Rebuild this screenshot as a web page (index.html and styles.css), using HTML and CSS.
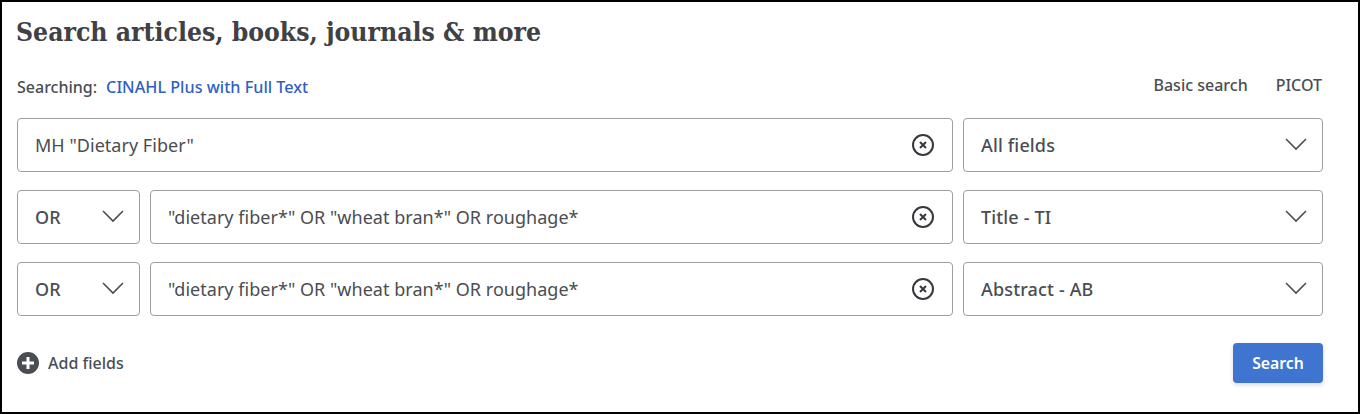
FILE: index.html
```html
<!DOCTYPE html>
<html lang="en">
<head>
    <meta charset="UTF-8">
    <title>Advanced search</title>
    <link rel="stylesheet" href="styles.css">
</head>
<body>
    <div class="panel">
        <h1>Search articles, books, journals &amp; more</h1>
        <div class="meta">
            <div class="searching">
                <span>Searching:</span>
                <a class="db-link" href="#">CINAHL Plus with Full Text</a>
            </div>
            <div class="modes">
                <a href="#">Basic search</a>
                <a href="#">PICOT</a>
            </div>
        </div>
        <div class="rows">
            <div class="row">
                <div class="box query">
                    <span class="query-text">MH "Dietary Fiber"</span>
                    <svg class="clear" viewBox="0 0 24 24"><circle cx="12" cy="12" r="10"/><path d="M9 9l6 6M15 9l-6 6"/></svg>
                </div>
                <div class="box select field">
                    <span>All fields</span>
                    <svg class="chev" viewBox="0 0 24 14"><path d="M2 2l10 10L22 2"/></svg>
                </div>
            </div>
            <div class="row">
                <div class="box select bool">
                    <span>OR</span>
                    <svg class="chev" viewBox="0 0 24 14"><path d="M2 2l10 10L22 2"/></svg>
                </div>
                <div class="box query">
                    <span class="query-text">"dietary fiber*" OR "wheat bran*" OR roughage*</span>
                    <svg class="clear" viewBox="0 0 24 24"><circle cx="12" cy="12" r="10"/><path d="M9 9l6 6M15 9l-6 6"/></svg>
                </div>
                <div class="box select field">
                    <span>Title - TI</span>
                    <svg class="chev" viewBox="0 0 24 14"><path d="M2 2l10 10L22 2"/></svg>
                </div>
            </div>
            <div class="row">
                <div class="box select bool">
                    <span>OR</span>
                    <svg class="chev" viewBox="0 0 24 14"><path d="M2 2l10 10L22 2"/></svg>
                </div>
                <div class="box query">
                    <span class="query-text">"dietary fiber*" OR "wheat bran*" OR roughage*</span>
                    <svg class="clear" viewBox="0 0 24 24"><circle cx="12" cy="12" r="10"/><path d="M9 9l6 6M15 9l-6 6"/></svg>
                </div>
                <div class="box select field">
                    <span>Abstract - AB</span>
                    <svg class="chev" viewBox="0 0 24 14"><path d="M2 2l10 10L22 2"/></svg>
                </div>
            </div>
        </div>
        <div class="actions">
            <a class="add" href="#">
                <svg class="plus" viewBox="0 0 22 22"><circle cx="11" cy="11" r="11"/><path d="M11 5v12M5 11h12"/></svg>
                Add fields
            </a>
            <button type="button" class="search-btn">Search</button>
        </div>
    </div>
</body>
</html>
```

FILE: styles.css
```css
html, body {
    margin: 0;
    padding: 0;
}
body {
    width: 1360px;
    height: 414px;
    overflow: hidden;
    background-color: #fff;
    font-family: "Noto Sans", "Open Sans", Arial, sans-serif;
    color: #4a4d52;
}
.panel {
    box-sizing: border-box;
    width: 1360px;
    height: 414px;
    border: 2px solid #000;
    padding: 13px 35px 0 15px;
}
h1 {
    margin: 0 0 0 -1px;
    font-family: "DejaVu Serif Condensed", "DejaVu Serif", "Liberation Serif", serif;
    font-size: 26.3px;
    line-height: 34px;
    font-weight: 700;
    color: #3f4145;
}
.meta {
    display: flex;
    justify-content: space-between;
    align-items: flex-start;
    margin-top: 18px;
    height: 51px;
    font-size: 16px;
    font-weight: 500;
}
.searching {
    display: flex;
    gap: 9px;
    padding-top: 10px;
    line-height: 20px;
}
.db-link {
    color: #2f5fc4;
    font-size: 16.2px;
    text-decoration: none;
}
.modes {
    display: flex;
    gap: 28px;
    padding-top: 8px;
    margin-right: 1px;
    line-height: 20px;
}
.modes a {
    color: #4a4d52;
    text-decoration: none;
}
.rows {
    display: flex;
    flex-direction: column;
    gap: 18px;
}
.row {
    display: flex;
    gap: 10px;
}
.box {
    box-sizing: border-box;
    height: 54px;
    display: flex;
    align-items: center;
    justify-content: space-between;
    background-color: #fff;
    border: 1px solid #9b9ea3;
    border-radius: 4px;
    font-size: 18px;
    letter-spacing: 0.03px;
}
.query {
    flex: 1;
    padding: 0 17px 0 17px;
}
.select {
    font-weight: 500;
    letter-spacing: 0.15px;
    padding: 0 14px 0 17px;
}
.field {
    width: 360px;
}
.bool {
    width: 123px;
}
.clear {
    width: 24px;
    height: 24px;
    fill: none;
    stroke: #36383c;
    stroke-width: 2;
}
.chev {
    width: 24px;
    height: 14px;
    margin-bottom: 3px;
    fill: none;
    stroke: #4a4d52;
    stroke-width: 1.6;
}
.actions {
    display: flex;
    justify-content: space-between;
    align-items: center;
    margin-top: 27px;
}
.add {
    display: flex;
    align-items: center;
    gap: 9px;
    color: #4a4d52;
    font-size: 16px;
    font-weight: 500;
    text-decoration: none;
}
.plus {
    width: 22px;
    height: 22px;
    fill: #4a4d52;
    stroke: #fff;
    stroke-width: 3;
}
.plus circle {
    stroke: none;
}
.search-btn {
    width: 90px;
    height: 40px;
    background-color: #3f74d0;
    color: #fff;
    border: none;
    border-radius: 4px;
    font-family: inherit;
    font-size: 15.8px;
    font-weight: 600;
    box-shadow: 0 2px 4px rgba(0,0,0,0.15);
    cursor: pointer;
}
```
